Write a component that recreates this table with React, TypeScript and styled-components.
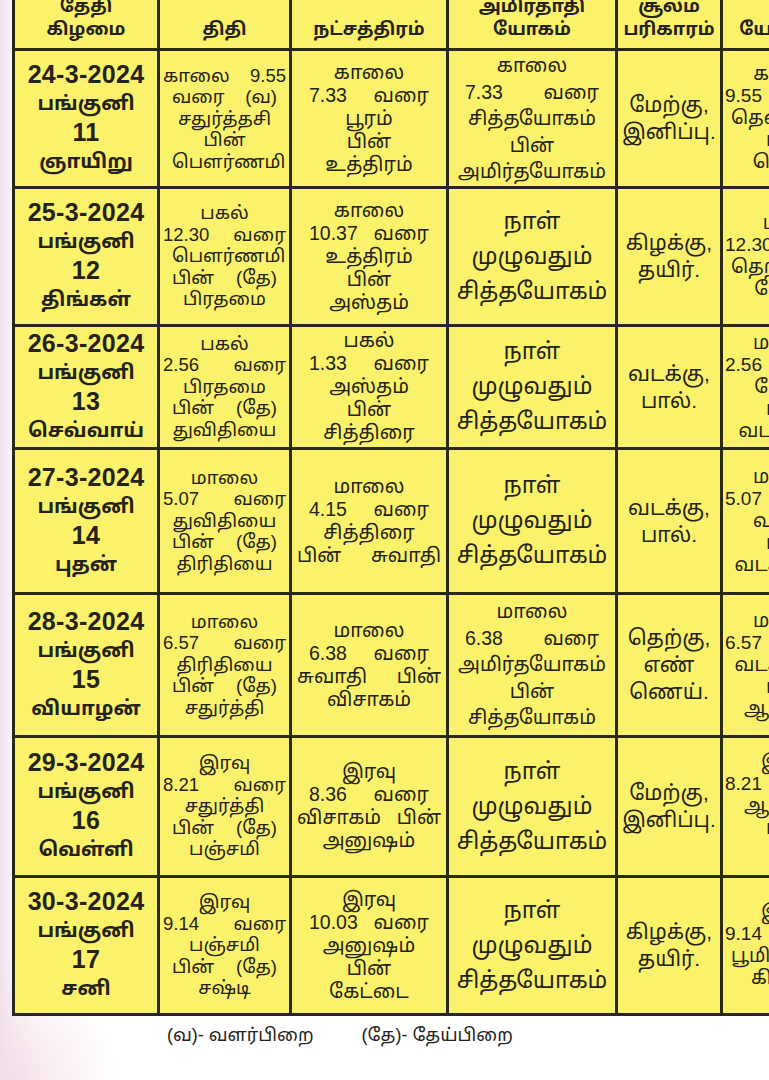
import styled, { createGlobalStyle } from 'styled-components';

const GlobalStyle = createGlobalStyle`
    html, body {
        margin: 0;
        padding: 0;
    }
    body {
        width: 769px;
        height: 1080px;
        overflow: hidden;
        background:
            radial-gradient(circle at 0 1080px, #f3dde8 0, rgba(255, 255, 255, 0) 120px),
            linear-gradient(to right, #f1e1ec 0, #faf4f8 12px, #ffffff 30px);
        font-family: "Liberation Sans", "Noto Sans Tamil", "Lohit Tamil", "Noto Sans", sans-serif;
        color: #24221a;
    }
`;

const Page = styled.div`
    padding-left: 12px;
    width: 840px;
`;

const Table = styled.table`
    width: 840px;
    margin-top: -14px;
    border-collapse: collapse;
    table-layout: fixed;
    background: #fbf26c;
    border: 3px solid #2b2819;
`;

const HeadCell = styled.th`
    height: 52px;
    border: 3px solid #2b2819;
    padding: 0 2px 7px;
    vertical-align: bottom;
    text-align: center;
    font-size: 18px;
    line-height: 23px;
    font-weight: 700;
`;

const Cell = styled.td<{ $pad: number }>`
    border: 3px solid #2b2819;
    padding: 1px ${p => p.$pad}px;
    vertical-align: middle;
    text-align: center;
`;

const DateLine = styled.div<{ $big?: boolean }>`
    font-size: ${p => p.$big ? '25px' : '20px'};
    line-height: 29px;
    font-weight: 700;
    letter-spacing: ${p => p.$big ? '0.3px' : '0'};
`;

const Line = styled.div<{ $spread: boolean; $inset: number; $size: number; $lh: number }>`
    padding: 0 ${p => p.$inset}px;
    font-size: ${p => p.$size}px;
    line-height: ${p => p.$lh}px;
    text-align: center;
    text-align-last: ${p => p.$spread ? 'justify' : 'center'};
    white-space: nowrap;
`;

const Legend = styled.div`
    display: flex;
    gap: 48px;
    padding: 8px 0 0 155px;
    font-size: 18px;
    line-height: 22px;
`;

type Row = {
    date: string;
    num: string;
    day: string;
    height: number;
    tithi: string[];
    star: string[];
    amirtha: string[];
    soolam: string[];
    yogini: string[];
};

const FULL_DAY = ['நாள்', 'முழுவதும்', 'சித்தயோகம்'];

const rows: Row[] = [
    {
        date: '24-3-2024', num: '11', day: 'ஞாயிறு', height: 137,
        tithi: ['காலை 9.55', 'வரை (வ)', 'சதுர்த்தசி', 'பின்', 'பௌர்ணமி'],
        star: ['காலை', '7.33 வரை', 'பூரம்', 'பின்', 'உத்திரம்'],
        amirtha: ['காலை', '7.33 வரை', 'சித்தயோகம்', 'பின்', 'அமிர்தயோகம்'],
        soolam: ['மேற்கு,', 'இனிப்பு.'],
        yogini: ['காலை', '9.55 வரை', 'தென்மேற்கு', 'பின்', 'தெற்கு'],
    },
    {
        date: '25-3-2024', num: '12', day: 'திங்கள்', height: 138,
        tithi: ['பகல்', '12.30 வரை', 'பௌர்ணமி', 'பின் (தே)', 'பிரதமை'],
        star: ['காலை', '10.37 வரை', 'உத்திரம்', 'பின்', 'அஸ்தம்'],
        amirtha: FULL_DAY,
        soolam: ['கிழக்கு,', 'தயிர்.'],
        yogini: ['பகல்', '12.30 வரை', 'தெற்கு பின்', 'மேற்கு'],
    },
    {
        date: '26-3-2024', num: '13', day: 'செவ்வாய்', height: 123,
        tithi: ['பகல்', '2.56 வரை', 'பிரதமை', 'பின் (தே)', 'துவிதியை'],
        star: ['பகல்', '1.33 வரை', 'அஸ்தம்', 'பின்', 'சித்திரை'],
        amirtha: FULL_DAY,
        soolam: ['வடக்கு,', 'பால்.'],
        yogini: ['மாலை', '2.56 வரை', 'மேற்கு', 'பின்', 'வடமேற்கு'],
    },
    {
        date: '27-3-2024', num: '14', day: 'புதன்', height: 145,
        tithi: ['மாலை', '5.07 வரை', 'துவிதியை', 'பின் (தே)', 'திரிதியை'],
        star: ['மாலை', '4.15 வரை', 'சித்திரை', 'பின் சுவாதி'],
        amirtha: FULL_DAY,
        soolam: ['வடக்கு,', 'பால்.'],
        yogini: ['மாலை', '5.07 வரை', 'வடக்கு', 'பின்', 'வடகிழக்கு'],
    },
    {
        date: '28-3-2024', num: '15', day: 'வியாழன்', height: 143,
        tithi: ['மாலை', '6.57 வரை', 'திரிதியை', 'பின் (தே)', 'சதுர்த்தி'],
        star: ['மாலை', '6.38 வரை', 'சுவாதி பின்', 'விசாகம்'],
        amirtha: ['மாலை', '6.38 வரை', 'அமிர்தயோகம்', 'பின்', 'சித்தயோகம்'],
        soolam: ['தெற்கு,', 'எண்', 'ணெய்.'],
        yogini: ['மாலை', '6.57 வரை', 'வடகிழக்கு', 'பின்', 'ஆகாயம்'],
    },
    {
        date: '29-3-2024', num: '16', day: 'வெள்ளி', height: 140,
        tithi: ['இரவு', '8.21 வரை', 'சதுர்த்தி', 'பின் (தே)', 'பஞ்சமி'],
        star: ['இரவு', '8.36 வரை', 'விசாகம் பின்', 'அனுஷம்'],
        amirtha: FULL_DAY,
        soolam: ['மேற்கு,', 'இனிப்பு.'],
        yogini: ['இரவு', '8.21 வரை', 'ஆகாயம்', 'பின்', 'பூமி'],
    },
    {
        date: '30-3-2024', num: '17', day: 'சனி', height: 138,
        tithi: ['இரவு', '9.14 வரை', 'பஞ்சமி', 'பின் (தே)', 'சஷ்டி'],
        star: ['இரவு', '10.03 வரை', 'அனுஷம்', 'பின்', 'கேட்டை'],
        amirtha: FULL_DAY,
        soolam: ['கிழக்கு,', 'தயிர்.'],
        yogini: ['இரவு', '9.14 வரை', 'பூமி பின்', 'கிழக்கு'],
    },
];

type LinesProps = {
    items: string[];
    size: number;
    lh: number;
    timeInset?: number;
    wordInset?: number;
};

function Lines({ items, size, lh, timeInset = 0, wordInset = 0 }: LinesProps) {
    return (
        <>
            {items.map((t, i) => (
                <Line
                    key={i}
                    $spread={t.includes(' ')}
                    $inset={/\d/.test(t) ? timeInset : wordInset}
                    $size={size}
                    $lh={lh}
                >
                    {t}
                </Line>
            ))}
        </>
    );
}

export default function App() {
    return (
        <>
            <GlobalStyle />
            <Page>
                <Table>
                    <colgroup>
                        <col style={{ width: 145 }} />
                        <col style={{ width: 132 }} />
                        <col style={{ width: 157 }} />
                        <col style={{ width: 169 }} />
                        <col style={{ width: 105 }} />
                        <col style={{ width: 132 }} />
                    </colgroup>
                    <thead>
                        <tr>
                            <HeadCell>தேதி<br />கிழமை</HeadCell>
                            <HeadCell>திதி</HeadCell>
                            <HeadCell>நட்சத்திரம்</HeadCell>
                            <HeadCell>அமிர்தாதி<br />யோகம்</HeadCell>
                            <HeadCell>சூலம்<br />பரிகாரம்</HeadCell>
                            <HeadCell>யோகினி</HeadCell>
                        </tr>
                    </thead>
                    <tbody>
                        {rows.map(r => {
                            const full = r.amirtha === FULL_DAY;
                            return (
                                <tr key={r.date} style={{ height: r.height }}>
                                    <Cell $pad={2}>
                                        <DateLine $big>{r.date}</DateLine>
                                        <DateLine>பங்குனி</DateLine>
                                        <DateLine $big>{r.num}</DateLine>
                                        <DateLine>{r.day}</DateLine>
                                    </Cell>
                                    <Cell $pad={3}>
                                        <Lines items={r.tithi} size={18.5} lh={21.5} wordInset={9} />
                                    </Cell>
                                    <Cell $pad={5}>
                                        <Lines items={r.star} size={19.5} lh={23} timeInset={12} />
                                    </Cell>
                                    <Cell $pad={4}>
                                        <Lines
                                            items={r.amirtha}
                                            size={full ? 23 : 19.5}
                                            lh={full ? 35 : 26.5}
                                            timeInset={12}
                                        />
                                    </Cell>
                                    <Cell $pad={2}>
                                        <Lines items={r.soolam} size={21} lh={27} />
                                    </Cell>
                                    <Cell $pad={2}>
                                        <Lines items={r.yogini} size={19} lh={22} wordInset={6} />
                                    </Cell>
                                </tr>
                            );
                        })}
                    </tbody>
                </Table>
                <Legend>
                    <span>(வ)- வளர்பிறை</span>
                    <span>(தே)- தேய்பிறை</span>
                </Legend>
            </Page>
        </>
    );
}
